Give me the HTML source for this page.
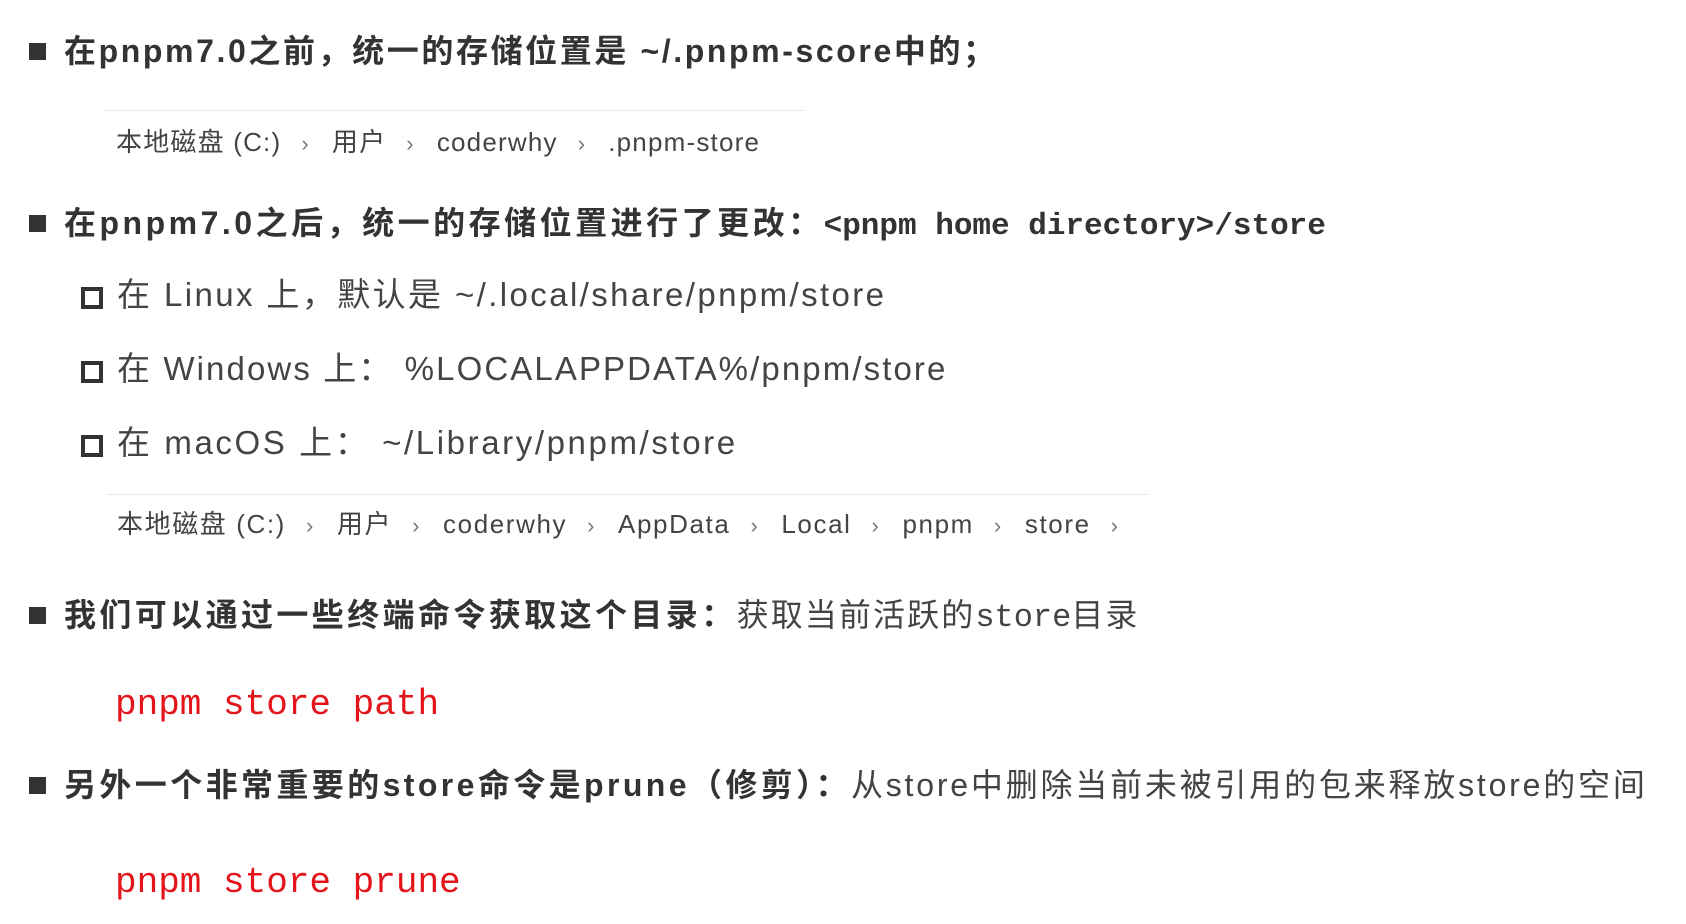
<!DOCTYPE html>
<html><head><meta charset="utf-8"><style>
html,body{margin:0;padding:0;background:#fff;width:1686px;height:924px;overflow:hidden;position:relative}
.l{position:absolute;white-space:nowrap;font-family:"Liberation Sans","Noto Sans CJK SC",sans-serif;color:#333;height:40px;line-height:40px}
.b{font-weight:bold;font-size:32px}
.n{font-size:33px;color:#444;letter-spacing:2.4px}
.sq{position:absolute;width:17px;height:17px;background:#333}
.hs{position:absolute;width:14px;height:14px;border:4px solid #333}
.crumb{position:absolute;white-space:nowrap;font-family:"Liberation Sans","Noto Sans CJK SC",sans-serif;font-size:26px;letter-spacing:1.2px;color:#444;line-height:30px;height:30px}
.crumb span{color:#777;margin:0 22px 0 20px;font-size:22px}
.hr{position:absolute;height:1px;background:#e8e8e8}
.mono{font-family:"Liberation Mono","Noto Sans CJK SC",monospace;letter-spacing:0}
.code{position:absolute;font-family:"Liberation Mono",monospace;font-size:36px;color:#e4141b;line-height:44px;white-space:nowrap}
</style></head><body>
<div class="sq" style="left:29px;top:43px"></div>
<div class="l b" style="left:64px;top:31px;letter-spacing:2.6px">在pnpm7.0之前，统一的存储位置是 ~/.pnpm-score中的；</div>
<div class="hr" style="left:103px;top:110px;width:702px"></div>
<div class="crumb" style="left:116px;top:127px">本地磁盘 (C:)<span>›</span>用户<span>›</span>coderwhy<span>›</span>.pnpm-store</div>

<div class="sq" style="left:29px;top:215px"></div>
<div class="l b" style="left:64px;top:203px"><span style="letter-spacing:3.5px">在pnpm7.0之后，统一的存储位置进行了更改：</span><span class="mono" style="font-size:31px">&lt;pnpm home directory&gt;/store</span></div>

<div class="hs" style="left:81px;top:287px"></div>
<div class="l n" style="left:117px;top:275px">在 Linux 上，默认是 ~/.local/share/pnpm/store</div>
<div class="hs" style="left:81px;top:361px"></div>
<div class="l n" style="left:117px;top:349px;letter-spacing:2.1px">在 Windows 上： %LOCALAPPDATA%/pnpm/store</div>
<div class="hs" style="left:81px;top:435px"></div>
<div class="l n" style="left:117px;top:423px;letter-spacing:2.6px">在 macOS 上： ~/Library/pnpm/store</div>

<div class="hr" style="left:106px;top:494px;width:1042px"></div>
<div class="crumb" style="left:117px;top:509px;letter-spacing:1.6px">本地磁盘 (C:)<span>›</span>用户<span>›</span>coderwhy<span>›</span>AppData<span>›</span>Local<span>›</span>pnpm<span>›</span>store<span>›</span></div>

<div class="sq" style="left:29px;top:607px"></div>
<div class="l b" style="left:64px;top:595px"><span style="letter-spacing:3.4px">我们可以通过一些终端命令获取这个目录：</span><span style="font-weight:normal;color:#444;letter-spacing:2.1px">获取当前活跃的<span class="mono">store</span>目录</span></div>
<div class="code" style="left:115px;top:683px">pnpm store path</div>

<div class="sq" style="left:29px;top:777px"></div>
<div class="l b" style="left:64px;top:765px"><span style="letter-spacing:3.4px">另外一个非常重要的store命令是prune（修剪）：</span><span style="font-weight:normal;color:#444;letter-spacing:2.8px">从store中删除当前未被引用的包来释放store的空间</span></div>
<div class="code" style="left:115px;top:861px">pnpm store prune</div>
</body></html>
